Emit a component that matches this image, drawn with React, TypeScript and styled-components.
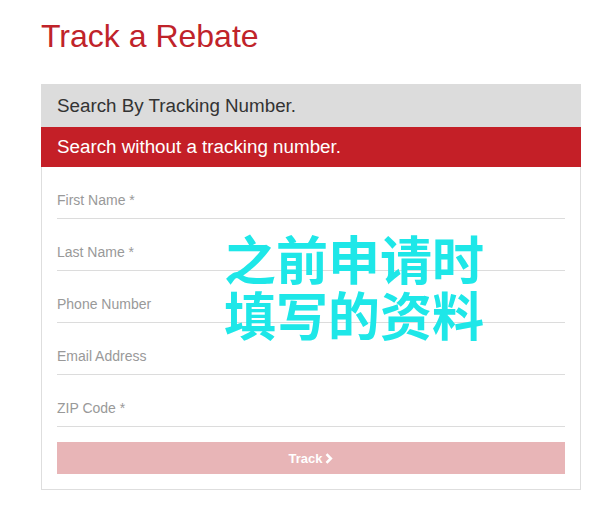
import React from "react";
import styled, { createGlobalStyle } from "styled-components";

const Global = createGlobalStyle`
  html, body { margin: 0; padding: 0; background: #ffffff; }
  body { font-family: "Liberation Sans", Arial, sans-serif; }
`;

const Page = styled.div`
  position: relative;
  width: 605px;
  height: 513px;
  box-sizing: border-box;
  padding: 18px 24px 0 41px;
`;

const Title = styled.h1`
  margin: 0 0 30px;
  font-size: 32px;
  line-height: 36px;
  font-weight: 400;
  color: #c0232a;
`;

const Panel = styled.div`
  width: 540px;
  box-sizing: border-box;
  border: 1px solid #dedede;
  border-top: none;
  background: #fff;
`;

const Tab = styled.div<{ $active?: boolean }>`
  display: flex;
  align-items: center;
  height: ${(p) => (p.$active ? "40px" : "43px")};
  box-sizing: border-box;
  margin: 0 -1px;
  padding: 0 15px 0 16px;
  font-size: 18.8px;
  background: ${(p) => (p.$active ? "#c41f27" : "#dcdcdc")};
  color: ${(p) => (p.$active ? "#ffffff" : "#333333")};
`;

const Body = styled.div`
  display: flex;
  flex-direction: column;
  padding: 0 15px 15px;
`;

const Field = styled.div`
  display: flex;
  align-items: flex-end;
  height: 43px;
  padding-bottom: 8px;
  border-bottom: 1px solid #dcdcdc;
`;

const Label = styled.span`
  font-size: 14px;
  line-height: 20px;
  color: #999999;
`;

const Button = styled.button`
  margin-top: 15px;
  height: 32px;
  border: none;
  background: #e8b5b7;
  color: #ffffff;
  font-family: "Liberation Sans", Arial, sans-serif;
  font-weight: 700;
  font-size: 13px;
  display: flex;
  align-items: center;
  justify-content: center;
  gap: 3px;
  padding: 0;
`;

const Overlay = styled.div`
  position: absolute;
  left: 224px;
  top: 230px;
  display: flex;
  flex-direction: column;
  pointer-events: none;
`;

const OverlayLine = styled.div`
  height: 56px;
  overflow: visible;
  font-family: "Noto Sans CJK SC", sans-serif;
  font-weight: 700;
  font-size: 52px;
  line-height: 56px;
  color: #1ee7e8;
  white-space: nowrap;
`;

const Chevron = () => (
  <svg width="8" height="11" viewBox="0 0 8 11" aria-hidden="true">
    <path d="M1.5 1.2 L5.8 5.5 L1.5 9.8" fill="none" stroke="#fff" strokeWidth="2.6" />
  </svg>
);

const fields = ["First Name *", "Last Name *", "Phone Number", "Email Address", "ZIP Code *"];

export default function App() {
  return (
    <>
      <Global />
      <Page>
        <Title>Track a Rebate</Title>
        <Panel>
          <Tab>Search By Tracking Number.</Tab>
          <Tab $active>Search without a tracking number.</Tab>
          <Body>
            {fields.map((f) => (
              <Field key={f}>
                <Label>{f}</Label>
              </Field>
            ))}
            <Button>
              Track <Chevron />
            </Button>
          </Body>
        </Panel>
        <Overlay>
          <OverlayLine>之前申请时</OverlayLine>
          <OverlayLine>填写的资料</OverlayLine>
        </Overlay>
      </Page>
    </>
  );
}
